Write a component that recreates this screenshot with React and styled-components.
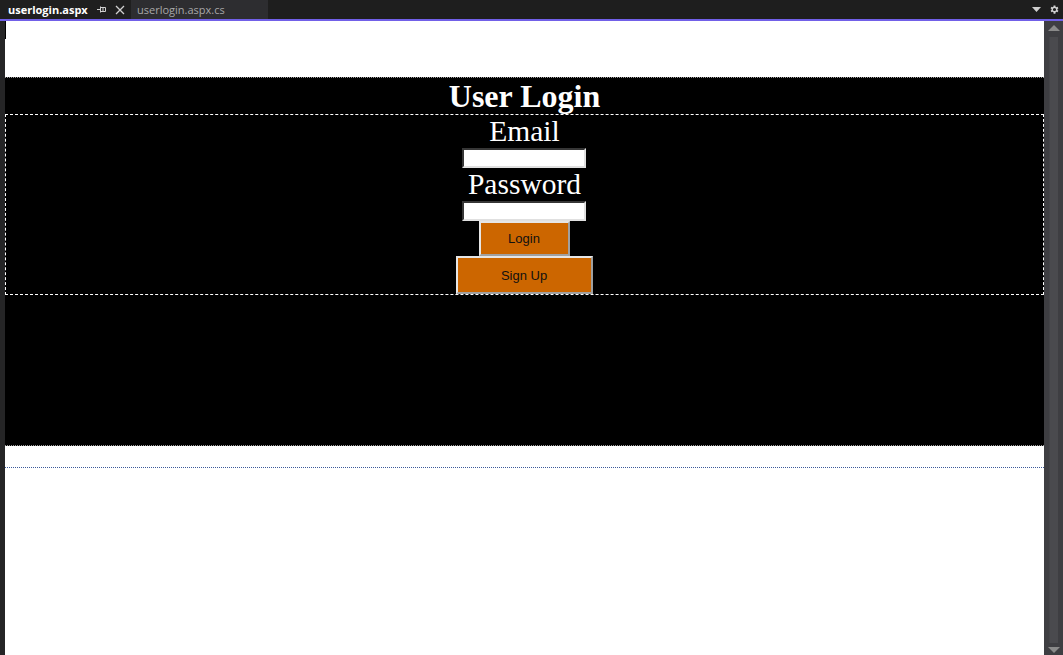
import React from 'react'
import styled, { createGlobalStyle } from 'styled-components'

const GlobalStyle = createGlobalStyle`
  html, body {
    margin: 0;
    padding: 0;
    width: 1063px;
    height: 655px;
    overflow: hidden;
    background: #1e1e1e;
  }
  * {
    box-sizing: border-box;
  }
`

const Window = styled.div`
  display: flex;
  flex-direction: column;
  width: 1063px;
  height: 655px;
  background: #1e1e1e;
`

const TabBar = styled.div`
  display: flex;
  align-items: stretch;
  height: 19px;
  background: #1e1e1e;
  font-family: 'Open Sans', 'Noto Sans', sans-serif;
  font-size: 11px;
`

const Tab = styled.div`
  display: flex;
  align-items: center;
  padding: 0 6px 0 ${({ active }) => (active ? '8px' : '6px')};
  width: ${({ width }) => width}px;
  background: ${({ active }) => (active ? '#1f1f1f' : '#2d2d30')};
  color: ${({ active }) => (active ? '#ffffff' : '#a8a8a8')};
  font-weight: ${({ active }) => (active ? 700 : 400)};
  white-space: nowrap;
`

const TabIcons = styled.div`
  display: flex;
  align-items: center;
  gap: 9px;
  margin-left: auto;
  color: #cfcfcf;
`

const TabSpacer = styled.div`
  flex: 1;
`

const BarTools = styled.div`
  display: flex;
  align-items: center;
  gap: 8px;
  padding-right: 3px;
  color: #d0d0d0;
`

const Accent = styled.div`
  height: 2px;
  background: #7160e8;
`

const Body = styled.div`
  flex: 1;
  display: flex;
  min-height: 0;
`

const LeftStrip = styled.div`
  width: 5px;
  background: #252526;
`

const Canvas = styled.div`
  flex: 1;
  display: flex;
  flex-direction: column;
  background: #ffffff;
  position: relative;
`

const Caret = styled.div`
  position: absolute;
  left: 0;
  top: 0;
  width: 1px;
  height: 18px;
  background: #000000;
`

const TopGap = styled.div`
  height: 56px;
`

const Panel = styled.div`
  height: 369px;
  background: #000000;
  border-top: 1px dotted #9a9a9a;
  border-bottom: 1px dotted #9a9a9a;
  display: flex;
  flex-direction: column;
  font-family: 'Liberation Serif', 'Times New Roman', serif;
  color: #ffffff;
`

const Title = styled.h1`
  margin: 0;
  height: 36px;
  line-height: 37px;
  font-size: 32px;
  font-weight: 700;
  text-align: center;
`

const FormBox = styled.div`
  height: 181px;
  border: 1px dashed #ffffff;
  display: flex;
  flex-direction: column;
  align-items: center;
`

const Label = styled.div`
  height: 34px;
  line-height: 32px;
  font-size: 29.5px;
  text-align: center;
`

const Field = styled.input`
  width: 124px;
  height: 20px;
  margin: 0 0 0 -1px;
  padding: 0;
  background: #ffffff;
  border: 2px inset #8a8a8a;
  border-right-color: #e0e0e0;
  border-bottom-color: #e0e0e0;
  outline: none;
`

const Button = styled.button`
  width: ${({ width }) => width}px;
  height: ${({ height }) => height}px;
  margin: 0 0 0 -1px;
  padding: 0;
  background: #cc6600;
  color: #111111;
  font-family: 'Liberation Sans', Arial, sans-serif;
  font-size: 13px;
  border: 2px solid #a0a0a0;
  border-top-color: #e6e6e6;
  border-left-color: #e6e6e6;
  flex-shrink: 0;
`

const MidGap = styled.div`
  height: 21px;
`

const BlueRule = styled.div`
  border-top: 1px dotted #3c5a9a;
`

const ScrollBar = styled.div`
  width: 19px;
  background: #3e3e42;
  display: flex;
  flex-direction: column;
  align-items: center;
  padding: 4px 0 2px;
`

const Thumb = styled.div`
  flex: 1;
  width: 9px;
  margin: 6px 0 4px;
  background: #4a4a4e;
  border-left: 1px solid #444448;
`

const Arrow = styled.div`
  width: 0;
  height: 0;
  border-left: 6px solid transparent;
  border-right: 6px solid transparent;
  ${({ down }) =>
    down ? 'border-top: 6px solid #8a8a8a;' : 'border-bottom: 6px solid #8a8a8a;'}
`

const PinIcon = () => (
  <svg width="9" height="7" viewBox="0 0 9 7">
    <path d="M0 3.5h3M3.5 0.5v6M3.5 1.5h5v4h-5M6 1.5v4" stroke="#d0d0d0" strokeWidth="1" fill="none" />
  </svg>
)

const CloseIcon = () => (
  <svg width="10" height="10" viewBox="0 0 10 10">
    <path d="M1 1l8 8M9 1l-8 8" stroke="#d0d0d0" strokeWidth="1.3" />
  </svg>
)

const DropIcon = () => (
  <svg width="9" height="5" viewBox="0 0 9 5">
    <path d="M0 0h9L4.5 5z" fill="#d0d0d0" />
  </svg>
)

const GearIcon = () => (
  <svg width="11" height="11" viewBox="0 0 24 24">
    <path
      d="M19.4 13a7.7 7.7 0 0 0 0-2l2.1-1.6-2-3.5-2.5 1a7.6 7.6 0 0 0-1.7-1L15 3h-4l-.4 2.9a7.6 7.6 0 0 0-1.7 1l-2.5-1-2 3.5L6.6 11a7.7 7.7 0 0 0 0 2l-2.1 1.6 2 3.5 2.5-1a7.6 7.6 0 0 0 1.7 1L11 21h4l.4-2.9a7.6 7.6 0 0 0 1.7-1l2.5 1 2-3.5zM13 15.5a3.5 3.5 0 1 1 0-7 3.5 3.5 0 0 1 0 7z"
      fill="#d0d0d0"
      transform="translate(-1 0)"
    />
  </svg>
)

const App = () => (
  <Window>
    <GlobalStyle />
    <TabBar>
      <Tab active width={131}>
        userlogin.aspx
        <TabIcons>
          <PinIcon />
          <CloseIcon />
        </TabIcons>
      </Tab>
      <Tab width={137}>userlogin.aspx.cs</Tab>
      <TabSpacer />
      <BarTools>
        <DropIcon />
        <GearIcon />
      </BarTools>
    </TabBar>
    <Accent />
    <Body>
      <LeftStrip />
      <Canvas>
        <Caret />
        <TopGap />
        <Panel>
          <Title>User Login</Title>
          <FormBox>
            <Label>Email</Label>
            <Field type="text" />
            <Label>Password</Label>
            <Field type="password" />
            <Button width={91} height={35}>Login</Button>
            <Button width={137} height={38}>Sign Up</Button>
          </FormBox>
        </Panel>
        <MidGap />
        <BlueRule />
      </Canvas>
      <ScrollBar>
        <Arrow />
        <Thumb />
        <Arrow down />
      </ScrollBar>
    </Body>
  </Window>
)

export default App
